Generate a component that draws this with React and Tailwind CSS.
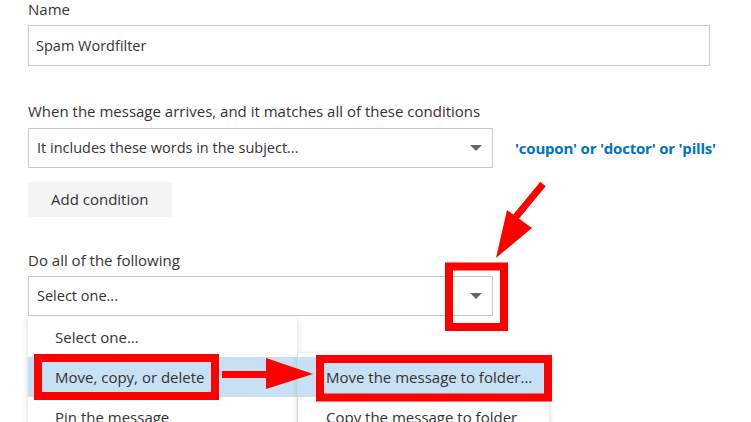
import React from 'react';

const font = { fontFamily: '"Open Sans", "Noto Sans", sans-serif' };

function Caret() {
  return (
    <svg width="12" height="6" viewBox="0 0 12 6" className="shrink-0">
      <path d="M0 0 L12 0 L6 6 Z" fill="#666666" />
    </svg>
  );
}

function Select({ children }) {
  return (
    <div className="flex items-center justify-between w-[465px] h-[40px] border border-[#c8c8c8] bg-white pl-[8px] pr-[10px] text-[14.5px] text-[#333]">
      <span>{children}</span>
      <Caret />
    </div>
  );
}

export default function App() {
  return (
    <div className="relative w-[751px] h-[422px] overflow-hidden bg-white text-[#333]" style={font}>
      <div className="pl-[28px] pt-0 text-[15px]">
        <div className="leading-[20px] -mt-[1px]">Name</div>
        <div className="mt-[6px] w-[682px] h-[41px] border border-[#c8c8c8] flex items-center pl-[7px] text-[14.5px]">
          Spam Wordfilter
        </div>

        <div className="mt-[35px] leading-[20px]">When the message arrives, and it matches all of these conditions</div>
        <div className="mt-[7px] flex items-center">
          <Select>It includes these words in the subject...</Select>
          <span className="ml-[22px] text-[15px] font-bold text-[#0072c6] tracking-[-0.2px]">'coupon' or 'doctor' or 'pills'</span>
        </div>

        <button className="mt-[14px] w-[144px] h-[35px] bg-[#f4f4f4] text-[15px] text-[#333] pl-[23px] text-left">
          Add condition
        </button>

        <div className="mt-[33px] leading-[20px]">Do all of the following</div>
        <div className="mt-[6px]">
          <Select>Select one...</Select>
        </div>
      </div>

      {/* main dropdown menu */}
      <div className="absolute left-[28px] top-[317px] w-[269px] h-[120px] bg-white shadow-[0_2px_6px_rgba(0,0,0,0.18)] text-[15px]">
        <div className="h-[40px] flex items-center pl-[27px]">Select one...</div>
        <div className="h-[40px] flex items-center pl-[27px] bg-[#c7e0f4]">Move, copy, or delete</div>
        <div className="h-[40px] flex items-center pl-[27px]">Pin the message</div>
      </div>

      {/* submenu */}
      <div className="absolute left-[298px] top-[353px] w-[251px] h-[90px] bg-white shadow-[0_2px_6px_rgba(0,0,0,0.2)] pt-[4px] text-[15px]">
        <div className="h-[40px] flex items-center pl-[28px] bg-[#c7e0f4]">Move the message to folder...</div>
        <div className="h-[40px] flex items-center pl-[28px]">Copy the message to folder</div>
      </div>

      {/* red annotations */}
      <svg className="absolute left-0 top-0 pointer-events-none" width="751" height="422">
        <rect x="449" y="266.5" width="55" height="60.5" fill="none" stroke="#ff0000" strokeWidth="8" />
        <rect x="38" y="358" width="177" height="38" fill="none" stroke="#ff0000" strokeWidth="8" />
        <rect x="320" y="359" width="228" height="38.5" fill="none" stroke="#ff0000" strokeWidth="8" />
        <line x1="543" y1="184" x2="515" y2="218" stroke="#ff0000" strokeWidth="7" />
        <polygon points="496,258 507,210 532,228" fill="#ff0000" />
        <rect x="222" y="371" width="46" height="7" fill="#ff0000" />
        <polygon points="266,358 313,374 266,389" fill="#ff0000" />
      </svg>
    </div>
  );
}
